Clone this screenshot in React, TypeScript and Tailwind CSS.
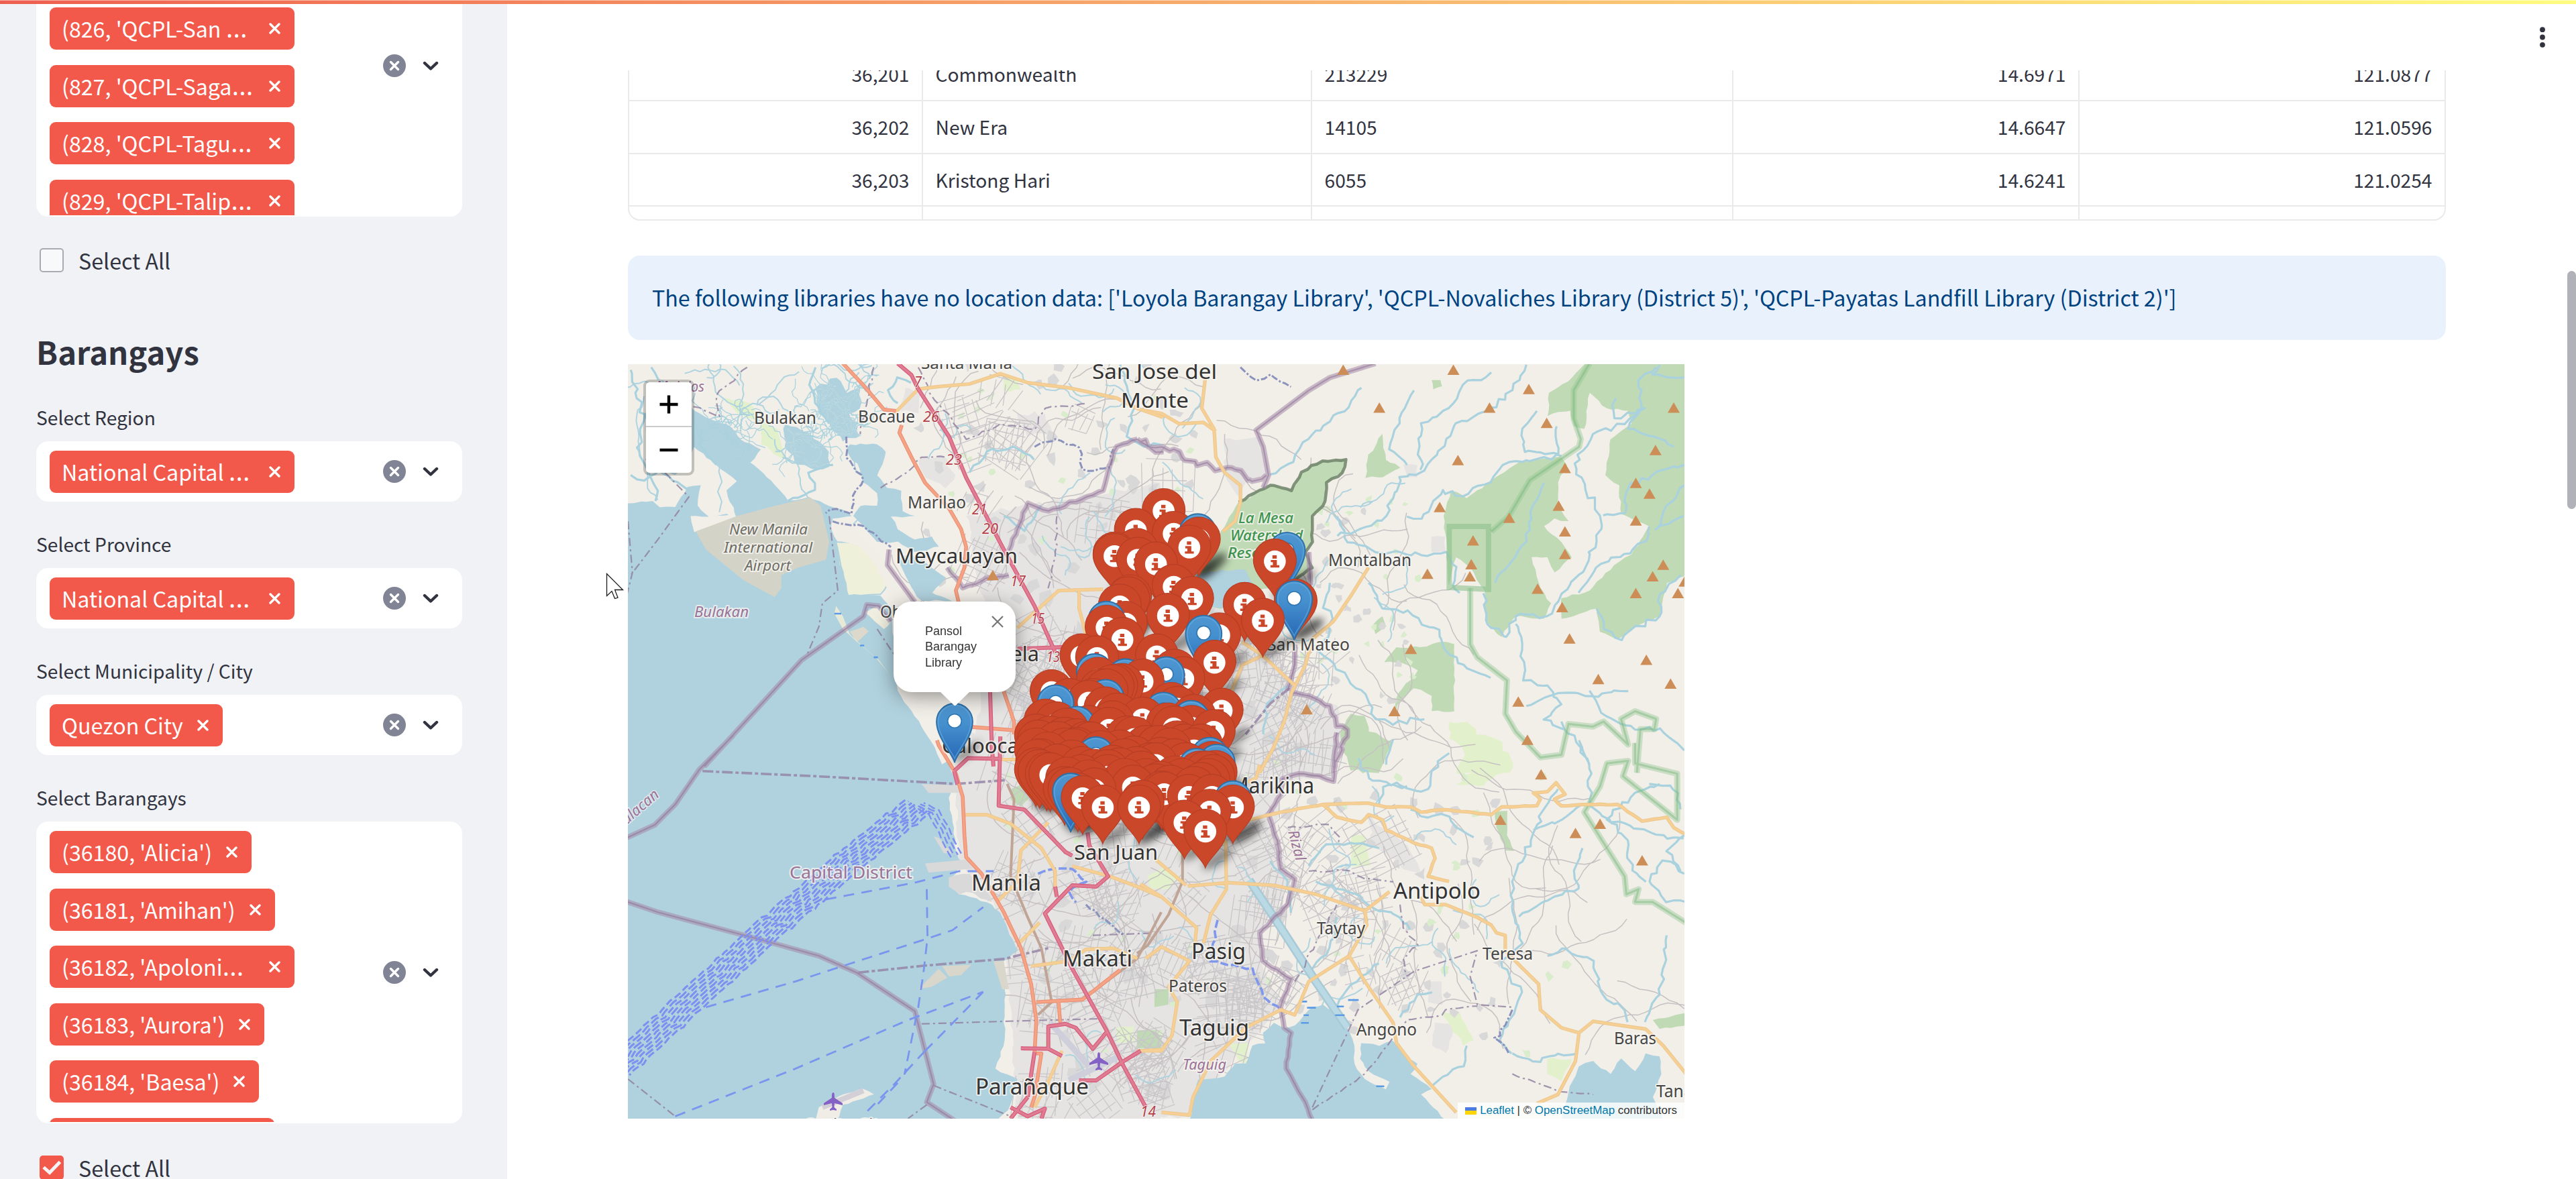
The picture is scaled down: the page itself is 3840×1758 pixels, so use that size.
import React from "react";

/* ---------- helpers for the map drawing ---------- */

type Pt = [number, number];
type Sheet = "nw" | "sw" | "ne" | "se";

// Each quarter of the map is digitised on its own sheet: [x scale, x shift, y shift]
const SHEETS: Record<Sheet, [number, number, number]> = {
  nw: [1.96, -6, -3],
  sw: [1.96, -6, 557],
  ne: [1.912, 764, -3],
  se: [1.912, 764, 557],
};

function pts(sheet: Sheet, list: string): Pt[] {
  const [sx, dx, dy] = SHEETS[sheet];
  return list.split(" ").map((p) => {
    const [x, y] = p.split(",").map(Number);
    return [x / sx + dx, y / 2.613 + dy] as Pt;
  });
}

function rng(seed: number) {
  let s = seed;
  return () => {
    s = (s * 1664525 + 1013904223) % 4294967296;
    return s / 4294967296;
  };
}

function toD(p: Pt[], close = false) {
  return "M" + p.map(([x, y]) => x.toFixed(1) + " " + y.toFixed(1)).join("L") + (close ? "Z" : "");
}

// Subdivides a line and shakes it so that it reads as a river or a coast
function wiggle(p: Pt[], amp: number, seed = 7, step = 9): Pt[] {
  const r = rng(seed);
  const out: Pt[] = [p[0]];
  for (let i = 1; i < p.length; i++) {
    const [x0, y0] = p[i - 1];
    const [x1, y1] = p[i];
    const n = Math.max(1, Math.round(Math.hypot(x1 - x0, y1 - y0) / step));
    for (let k = 1; k <= n; k++) {
      const t = k / n;
      const a = k === n ? amp * 0.3 : amp;
      out.push([x0 + (x1 - x0) * t + (r() - 0.5) * 2 * a, y0 + (y1 - y0) * t + (r() - 0.5) * 2 * a]);
    }
  }
  return out;
}

const line = (s: Sheet, l: string, amp = 0) => toD(amp ? wiggle(pts(s, l), amp, l.length * 13 + 5) : pts(s, l));
const area = (s: Sheet, l: string, amp = 0) => {
  const p = pts(s, l);
  p.push(p[0]);
  return toD(amp ? wiggle(p, amp, l.length * 7 + 3) : p, true);
};

/* ---------- map data ---------- */

const BAY = toD(
  wiggle(
    [
      ...pts("nw", "-20,552 85,540 105,565 150,565 185,485 225,480 215,560 250,605 300,590 330,610 300,500 330,465 270,400 205,330 150,440 130,430 120,380 190,180 240,215 300,240 340,300 400,340 370,390 430,460 480,540 540,525 600,560 640,575 665,600 610,610 605,650 625,700 630,790 670,830 690,905 750,910 780,960 790,1100 800,1280 850,1380 900,1480 930,1568"),
      ...pts("sw", "945,90 970,170 950,235 960,330 970,440 990,490 950,560 980,610 1060,640 1100,680 1150,830 1110,870 1115,1000 1110,1200 1085,1290 1150,1330 1130,1430 1090,1500 -20,1500"),
    ],
    1.6,
    3,
  ),
  true,
);

const WATER = [
  area("nw", "560,100 620,60 650,120 690,100 690,180 660,200 690,290 640,310 600,240 570,200", 3),
  area("nw", "470,240 540,280 600,350 600,410 560,420 500,390 470,330", 3),
  area("nw", "660,320 740,320 765,350 740,440 770,490 810,500 815,580 850,600 780,600 800,650 850,690 900,680 920,720 850,740 800,700 740,700 700,640 670,600 690,560 740,560 740,510 700,470 690,420 650,340", 2),
  area("nw", "800,760 840,750 900,800 940,840 900,900 960,930 870,930 830,850", 2),
  area("ne", "160,830 230,810 300,810 320,860 290,890 240,960 200,950", 2),
  area("se", "140,1490 165,1330 240,1320 270,1270 300,1270 320,1200 355,1190 350,1150 380,1110 410,1130 440,1120 490,1050 520,1040 560,1080 590,1130 610,1200 610,1270 640,1330 700,1370 710,1340 650,1300 625,1250 630,1190 680,1200 720,1180 760,1250 790,1270 770,1310 830,1370 800,1390 870,1490", 1.5),
  area("se", "1200,1490 1220,1380 1250,1280 1290,1260 1340,1310 1370,1250 1410,1300 1440,1230 1480,1240 1485,1310 1460,1400 1490,1490", 1.5),
];

const FOREST = [
  area("ne", "1275,0 1570,0 1570,820 1500,860 1480,990 1400,1040 1360,1080 1310,1050 1300,960 1200,1000 1200,920 1280,890 1350,790 1400,750 1450,640 1370,590 1365,480 1325,440 1340,300 1400,240 1390,190 1330,180 1280,120 1265,260 1235,250 1225,190 1175,200 1160,210 1165,120 1230,60", 1.5),
  area("ne", "885,500 930,530 1000,460 1080,390 1200,370 1215,400 1190,470 1190,560 1220,620 1180,610 1150,640 1200,700 1230,760 1180,820 1160,760 1115,760 1140,880 1170,940 1150,1000 1070,990 1030,1070 985,1010 980,890 940,800 900,760 880,870 865,600", 1.5),
  area("ne", "800,1110 860,1090 895,1100 895,1360 830,1360 830,1300 780,1270 740,1320 720,1380 735,1290 790,1200 740,1170 695,1170 730,1110", 1.5),
  area("ne", "690,280 700,380 740,410 690,450 640,450 650,360", 2),
  area("ne", "690,990 700,1030 670,1060 665,1020", 1),
  area("ne", "600,1370 640,1380 650,1440 690,1460 720,1480 680,1600 600,1590 570,1450", 3),
  area("ne", "830,70 855,70 860,95 835,105", 1),
  area("se", "1010,290 1045,285 1045,380 1065,440 1040,440 1015,350", 1),
  area("se", "1460,1100 1560,1070 1560,1120 1480,1135", 1),
  area("se", "40,980 80,980 80,1040 40,1050", 0),
  area("se", "-10,1140 60,1140 60,1210 -10,1210", 0),
  area("sw", "1130,200 1190,170 1190,230 1160,270 1130,240", 1),
];

const MEADOW = [
  area("ne", "880,1400 930,1400 960,1450 1030,1480 1030,1600 900,1600 930,1500 880,1470", 3),
  area("se", "900,20 1050,60 1060,120 960,190 900,180 960,120", 3),
  area("se", "600,380 640,380 655,500 600,500", 1),
  area("se", "20,540 70,500 110,540 80,590 30,590", 1),
  area("nw", "620,700 690,710 720,790 760,830 740,900 690,905 670,820 630,800", 1),
  area("nw", "290,140 370,160 400,230 330,200", 2),
  area("nw", "400,230 450,260 470,380 400,320", 2),
  area("nw", "1110,60 1150,60 1160,110 1110,110", 2),
  area("sw", "1440,1130 1490,1120 1490,1190 1440,1190", 2),
  area("se", "860,1070 910,1070 950,1180 920,1200", 2),
  area("se", "1160,1250 1230,1250 1200,1340 1160,1310", 2),
  area("se", "250,1190 310,1190 300,1270 280,1260", 1),
];

const URBAN = [
  area("nw", "860,380 930,360 970,440 940,490 880,450", 3),
  area("nw", "820,100 870,120 860,200 810,190", 3),
  area("nw", "1150,200 1230,200 1250,280 1180,290", 4),
  area("nw", "1000,600 1568,470 1568,1600 1000,1568 1080,1100", 4),
  area("sw", "960,-20 1570,-20 1570,1500 1150,1500 1120,880 1080,640 980,480", 2),
  area("se", "-20,-30 560,-30 550,160 400,160 380,400 430,560 340,770 350,900 400,1050 300,1200 140,1480 -20,1480", 3),
  area("ne", "-20,700 260,700 440,1280 560,1340 590,1500 540,1600 -20,1600", 3),
  area("ne", "240,300 340,290 360,440 300,470 280,530 240,440", 3),
  area("ne", "830,680 870,680 870,740 830,740", 2),
  area("ne", "750,400 790,400 790,450 760,450", 2),
  area("se", "650,300 700,360 760,420 800,540 740,500 660,410", 3),
  area("se", "820,950 860,950 860,1040 820,1030", 2),
  area("se", "840,1110 900,1110 870,1230 830,1200", 2),
];

function scatter(seed: number, n: number, x0: number, y0: number, x1: number, y1: number, size: number) {
  const r = rng(seed);
  let d = "";
  for (let i = 0; i < n; i++) {
    const cx = x0 + r() * (x1 - x0);
    const cy = y0 + r() * (y1 - y0);
    const k = 5 + Math.floor(r() * 4);
    const ring: Pt[] = [];
    for (let j = 0; j < k; j++) {
      const a = (j / k) * Math.PI * 2;
      const q = size * (0.3 + r() * 0.8);
      ring.push([cx + Math.cos(a) * q, cy + Math.sin(a) * q]);
    }
    d += toD(ring, true);
  }
  return d;
}

function streetGrids(seed: number, n: number, x0: number, y0: number, x1: number, y1: number) {
  const r = rng(seed);
  let d = "";
  for (let i = 0; i < n; i++) {
    const cx = x0 + r() * (x1 - x0);
    const cy = y0 + r() * (y1 - y0);
    const a = r() * 1.5;
    const c = Math.cos(a);
    const s = Math.sin(a);
    const h = 18 + r() * 26;
    const gap = 10 + r() * 9;
    for (let t = -h; t <= h; t += gap) {
      const e = h * (0.6 + r() * 0.5);
      const b = (r() - 0.5) * 8;
      d += toD([[cx + t * c - e * s, cy + t * s + e * c], [cx + t * c + e * s + b, cy + t * s - e * c]]);
      if (r() > 0.4) d += toD([[cx + e * c - t * s, cy + e * s + t * c], [cx - e * c - t * s, cy - e * s + t * c + b]]);
    }
  }
  return d;
}

function wander(seed: number, n: number, x0: number, y0: number, x1: number, y1: number, steps: number, len: number, turn: number) {
  const r = rng(seed);
  let d = "";
  for (let i = 0; i < n; i++) {
    let x = x0 + r() * (x1 - x0);
    let y = y0 + r() * (y1 - y0);
    let a = r() * 6.28;
    const p: Pt[] = [[x, y]];
    for (let j = 0; j < steps; j++) {
      a += (r() - 0.5) * turn;
      x += Math.cos(a) * len;
      y += Math.sin(a) * len;
      p.push([x, y]);
    }
    d += toD(p);
  }
  return d;
}

const BLOCKS = scatter(11, 70, 560, 330, 1010, 1110, 15) + scatter(12, 45, 430, 0, 880, 330, 11) + scatter(13, 55, 1000, 640, 1300, 1010, 10) + scatter(15, 22, 1010, 180, 1160, 520, 8);
const GREENS = scatter(21, 26, 1000, 150, 1180, 520, 7) + scatter(22, 30, 560, 560, 1010, 1110, 7) + scatter(24, 22, 440, 20, 860, 330, 7) + scatter(25, 20, 1020, 600, 1420, 1050, 8);
const STREETS = streetGrids(31, 115, 570, 400, 1010, 1110) + streetGrids(33, 14, 480, 40, 860, 330) + streetGrids(35, 12, 1010, 680, 1160, 960) + streetGrids(36, 8, 960, 420, 1060, 620);
const TRACKS = wander(41, 36, 430, 10, 880, 340, 12, 12, 1.1) + wander(42, 22, 980, 130, 1200, 640, 13, 12, 1.1) + wander(43, 24, 1000, 640, 1500, 1080, 16, 12, 0.9) + wander(44, 40, 560, 560, 1000, 1100, 12, 12, 0.7);
const BROOKS = wander(51, 18, 0, 0, 200, 140, 12, 8, 1.6) + wander(52, 16, 240, 0, 480, 300, 10, 8, 1.8) + wander(53, 16, 580, 0, 880, 330, 12, 7, 1.5) + wander(54, 12, 1000, 150, 1160, 640, 12, 7, 1.5) + wander(55, 14, 1000, 640, 1300, 1040, 12, 7, 1.5) + wander(56, 10, 640, 640, 990, 1090, 10, 7, 1.5);
const FISHPONDS = wander(57, 34, 270, 30, 345, 110, 9, 7, 2.4) + wander(58, 18, 230, 90, 300, 150, 8, 7, 2.4) + wander(59, 20, 110, 80, 180, 120, 8, 7, 2.4);

const RIVERS = [
  line("ne", "630,100 600,150 540,230 480,300 420,400 370,440", 4),
  line("ne", "780,110 740,220 710,340 760,400", 3),
  line("ne", "1000,40 920,90 880,180 800,240 795,330 800,420", 4),
  line("ne", "1100,10 1060,110 1000,180 900,240 870,300 830,380 800,430 740,450 700,600 660,640 560,680", 4),
  line("ne", "1130,190 1090,260 1095,350 1190,360 1185,250", 3),
  line("ne", "1200,365 1100,380 1030,400 1000,470 920,520 860,500 830,560 800,610 760,600", 4),
  line("ne", "1355,140 1350,220 1400,200 1440,180 1380,240 1290,280 1260,340 1240,420 1270,500 1310,600 1300,700 1260,820 1200,900 1160,990 1070,990 1040,1070 990,1020 975,900", 5),
  line("ne", "1300,960 1320,1040 1370,1080 1400,1040 1480,990 1480,900 1540,830", 4),
  line("ne", "1450,640 1440,700 1380,750 1300,800 1250,900", 4),
  line("ne", "1550,400 1460,440 1390,490 1380,590 1320,600", 4),
  line("ne", "1550,480 1500,560 1470,650 1550,600", 3),
  line("ne", "1470,20 1420,70 1430,180 1390,260 1480,300 1520,330", 3),
  line("ne", "1550,60 1460,50 1480,10", 2),
  line("ne", "1150,470 1120,560 1100,700 1050,790 1010,860", 3),
  line("ne", "560,600 590,700 670,740 740,740 800,750 870,740 900,800 890,870 910,900", 3),
  line("ne", "650,860 690,960 760,970 800,1020 850,1040 870,1120 920,1180 1000,1230", 4),
  line("ne", "540,860 520,960 550,1000 510,1130 560,1200 640,1290 660,1370 720,1410 810,1390", 5),
  line("ne", "1070,1020 1090,1100 1090,1240 1160,1260 1200,1330 1150,1390 1210,1430", 4),
  line("ne", "1100,1340 1180,1290 1270,1300 1390,1280", 4),
  line("ne", "1280,1280 1330,1380 1400,1420 1480,1430 1550,1510", 4),
  line("ne", "1200,1400 1240,1480 1280,1568", 4),
  line("ne", "720,1470 700,1568", 2),
  line("ne", "350,1450 360,1330 420,1260", 3),
  line("ne", "400,860 400,1000 370,1120", 3),
  line("se", "880,60 830,130 820,200 760,200 700,170 650,160 620,80", 4),
  line("se", "680,260 690,190 760,190", 3),
  line("se", "1190,200 1150,280 1120,370 1090,480 1060,560 1070,720 1090,800 1030,870 1050,930 1090,990 1050,1100 1020,1180 1060,1230", 4),
  line("se", "1120,360 1200,320 1260,260", 3),
  line("se", "1260,430 1240,500 1250,590 1150,640 1080,700", 4),
  line("se", "1250,10 1280,100 1280,260 1360,340 1390,420 1400,520 1440,560", 4),
  line("se", "1480,180 1400,230 1330,320 1470,380 1550,390", 4),
  line("se", "1450,180 1520,200 1540,280", 4),
  line("se", "1160,850 1200,820 1290,870 1320,1000 1380,1060 1390,1110", 4),
  line("se", "1500,770 1490,900 1480,1000 1440,1110", 4),
  line("se", "1550,530 1490,480 1450,560 1500,640 1551,640", 4),
  line("se", "770,280 820,310 860,300 950,390", 4),
  line("se", "480,500 520,430 600,410 680,430", 4),
  line("se", "500,560 580,590 650,650 740,700 770,750", 4),
  line("se", "370,480 420,560 430,680", 3),
  line("se", "560,700 540,820 490,900", 3),
  line("se", "680,880 600,960 560,1050", 3),
  line("se", "740,1090 790,1000 830,990", 3),
  line("se", "1060,1230 1120,1260 1180,1240 1240,1230", 3),
  line("se", "930,1200 920,1280 860,1320 830,1360", 3),
  line("se", "1550,380 1500,440 1540,520", 3),
  line("nw", "1450,10 1490,180 1470,290 1520,330 1568,320", 3),
  line("nw", "1010,430 1060,350 1140,330 1200,380", 3),
  line("nw", "800,160 770,110 800,60 840,80", 3),
  line("nw", "560,20 540,90 560,160 600,240", 3),
  line("nw", "80,20 140,120 150,180", 3),
  line("nw", "20,30 60,230 40,330 70,430 100,500 90,540", 4),
  line("nw", "20,440 60,460 100,420 190,500", 3),
  line("nw", "230,260 220,320 270,400", 2),
  line("nw", "480,540 560,500 540,430 610,400", 3),
  line("nw", "1110,600 1170,660 1200,600 1220,560", 3),
];

const NAVY_RIVERS = [
  line("nw", "1200,330 1260,300 1330,330 1340,420 1420,410 1430,340", 3),
  line("nw", "650,290 650,370 700,460 670,520 665,590 620,570 590,590", 2),
  line("nw", "610,620 700,640 780,720", 2),
  line("ne", "285,20 330,70 370,50 430,95", 3),
  line("sw", "1350,650 1460,765", 2),
  line("se", "1060,1060 1040,1120 1010,1170 1050,1230", 3),
];

const PROVINCE = [
  line("nw", "235,1575 520,1160 700,990 710,945 745,950 780,1010"),
  line("nw", "775,730 770,790 850,935"),
  line("sw", "320,-10 220,125 150,260 90,340 0,395"),
  line("sw", "0,635 100,680 380,780 570,850 680,915 850,1065 905,1350 885,1420 970,1495"),
  line("nw", "1125,735 1150,650 1180,550 1240,580 1400,500 1420,400 1440,330 1500,300", 1.5),
  line("nw", "1500,300 1540,340 1575,350", 3),
  line("ne", "670,5 540,60 480,110 330,265 350,330 365,440 350,490"),
  line("ne", "0,310 60,330 120,370 200,410 260,410 310,460 360,440", 5),
  line("ne", "480,740 485,870"),
  line("ne", "440,1100 440,1180 420,1280"),
  line("ne", "425,1290 480,1300 540,1340 560,1420 590,1430 550,1600", 3),
  line("se", "560,-20 550,170 510,150 450,140 405,160 400,220 365,300 390,400 400,510 440,550 420,650 340,760 350,870 430,940 400,1050 410,1130 430,1150 415,1290 470,1420 490,1490", 1.2),
  line("nw", "945,800 990,880 1060,840 1125,830", 2),
];

const MUNICIPAL = [
  line("nw", "12,620 25,820 10,900"),
  line("nw", "120,430 190,525 100,690 20,830"),
  line("nw", "600,600 610,720 625,890 580,940 570,1030 535,1140"),
  line("sw", "12,1330 150,1475"),
  line("sw", "905,1355 1130,1475"),
  line("sw", "885,1430 830,1484"),
  line("sw", "870,1115 1110,1105 1390,1095"),
  line("sw", "1370,770 1568,760"),
  line("nw", "360,20 270,130 280,210 190,160", 2),
  line("nw", "750,490 830,430 870,370 940,370", 2),
  line("nw", "730,20 690,280", 2),
  line("nw", "860,20 900,130 1000,300 1100,240 1200,260 1230,180 1350,160", 2),
  line("nw", "1265,600 1260,760 1240,880", 2),
  line("nw", "740,1040 790,1140"),
  line("se", "490,1440 590,1150 620,1060 780,910 960,830 940,930 960,1040 1060,1050"),
  line("se", "490,1450 640,1310 760,1100 860,1080 870,1060 960,1045", 1),
  line("se", "480,520 600,520 640,550 720,560", 2),
  line("se", "420,350 540,340 570,390 560,420", 2),
  line("se", "740,650 750,740 790,810 750,860 760,930", 2),
  line("se", "1060,1310 1200,1380 1290,1390", 1),
  line("se", "440,950 500,800 560,650", 2),
];

const MUNICIPAL_BOLD = [line("sw", "230,130 560,150 970,180 1120,165"), line("sw", "685,915 880,888 1110,862 1240,820"), line("ne", "425,1270 370,1330 300,1450")];

const PRIMARY = [
  line("nw", "790,200 860,105 920,95 1010,85 1100,45 1180,80 1300,100 1440,140 1500,180 1575,215"),
  line("nw", "1150,1035 1270,890 1400,885"),
  line("nw", "1330,890 1330,960 1350,1060"),
  line("ne", "185,60 175,180 210,260 215,370 240,430 285,480 285,545 270,620 235,660"),
  line("ne", "0,185 60,200 110,240 180,235 215,270"),
  line("ne", "650,800 600,910 550,1010 490,1080 470,1180 430,1290 410,1400 380,1500 340,1600"),
  line("ne", "290,1090 350,1145 440,1260"),
  line("ne", "345,1145 290,1180 260,1280"),
  line("se", "310,320 400,290 520,260 650,255 700,270 770,270 800,290 860,280 1000,300 1030,270 1130,265 1140,240 1120,215 1160,210 1185,175 1210,220 1180,240 1200,265 1260,260 1360,260 1430,325 1500,310 1520,350 1551,375", 0.6),
  line("se", "520,260 560,310 630,330 650,300 690,320 700,360 780,410 830,430 840,470 820,540 880,560", 0.6),
  line("se", "135,578 250,565 380,575 500,610 640,675 710,600"),
  line("se", "640,675 645,730 595,850 640,950 720,1110 730,1190 780,1280 900,1460"),
  line("se", "595,850 480,950 440,1080 400,1060 300,1130 200,1260 150,1400 140,1470 60,1460"),
  line("se", "800,620 810,650 870,650 960,700 1000,730 1015,760 1040,770 1040,830 1090,900 1135,960 1140,1060 1200,1130 1250,1150 1290,1105 1440,1135 1490,1200 1555,1310"),
  line("se", "1250,1150 1240,1260 1190,1390 1130,1425"),
  line("se", "243,400 245,590 200,690 180,800"),
  line("se", "0,570 60,620 160,740 155,800"),
  line("se", "40,470 130,575"),
  line("se", "15,860 60,815 140,870 80,970 105,1030 90,1160 60,1220 -10,1220"),
  line("ne", "340,1568 330,1620 300,1640"),
  line("sw", "1100,85 1150,85"),
  line("sw", "995,300 1060,300 1130,335 1220,430 1260,520 1260,600"),
  line("sw", "1240,330 1160,440 1150,560 1090,640"),
  line("sw", "1190,890 1300,870 1350,825 1430,820 1500,860"),
  line("sw", "1310,500 1420,540 1500,580 1570,620"),
  line("sw", "1215,720 1155,800"),
  line("sw", "1280,1220 1240,1340 1200,1440"),
  line("sw", "1510,1220 1570,1215"),
];

const TRUNK = [
  line("nw", "640,5 700,90 760,185 795,190"),
  line("nw", "812,245 805,275 840,370 880,470 950,570 985,650 1000,720 995,800 970,890 978,935"),
  line("nw", "1110,1283 1140,1400 1140,1450"),
  line("nw", "1000,1420 1150,1435"),
  line("sw", "915,10 920,30 970,140 990,230 995,380 1000,465 1045,530 1110,680 1160,820 1190,960 1205,1100 1200,1230 1220,1230 1200,1400 1190,1440"),
  line("sw", "1205,1030 1340,1020 1450,905"),
  line("sw", "1270,1030 1275,1110"),
];

const BROWN_ROADS = [
  line("sw", "1120,180 1140,240 1130,540 1180,700 1220,820 1250,1030 1210,1080"),
  line("se", "120,440 120,560 80,690 20,810 -10,840"),
  line("sw", "1340,1020 1500,860 1570,680"),
];

const MOTORWAY = [
  line("nw", "800,5 840,50 860,105 950,290 1000,450 1110,730 1200,950 1260,1130"),
  line("nw", "1150,1117 1290,1110"),
  line("nw", "1070,1283 1075,1500 1080,1575"),
  line("sw", "965,130 1005,80 1100,82"),
  line("sw", "965,130 975,180"),
  line("sw", "1100,-5 1095,265 1170,280 1290,445 1310,460"),
  line("sw", "1355,370 1360,420 1415,540 1380,580 1310,575 1230,685 1310,900 1410,1140 1460,1280 1525,1440"),
  line("sw", "1260,580 1265,620"),
  line("sw", "1160,1210 1240,1212 1240,1125 1290,1115 1320,1130 1370,1212 1412,1145"),
  line("sw", "1240,1212 1280,1240"),
  line("sw", "1330,1335 1380,1335 1460,1260 1510,1220"),
  line("sw", "1180,1400 1130,1484"),
  line("sw", "1130,1440 1180,1475 1230,1445 1220,1484"),
  line("sw", "1200,1225 1180,1400"),
];

const PARK_LINES = [
  line("ne", "1280,5 1235,110 1235,220 1255,300 1250,330 1110,460 1050,600 1000,660"),
  line("ne", "940,880 940,1100 960,1150 1045,1240 1040,1370 1070,1440 1140,1540 1200,1530 1220,1410 1290,1420 1320,1400 1390,1490 1370,1390 1410,1360 1470,1390 1465,1430 1425,1430 1415,1600"),
  line("se", "1410,20 1410,100 1530,140 1530,320 1375,150 1390,90 1330,100 1310,190 1265,290 1380,540 1385,610 1420,590 1410,640 1460,640 1560,725"),
];

const FERRIES = [
  line("sw", "240,1050 500,950 870,790 960,750 1050,660"),
  line("sw", "590,630 850,565 980,520 1080,520"),
  line("sw", "885,590 887,780 875,920 860,1050 840,1180 820,1310 835,1280"),
  line("sw", "150,1475 500,1290 830,1100 1050,990"),
  line("sw", "1050,990 940,1140 880,1220"),
  line("sw", "880,1220 790,1350 700,1470"),
  line("sw", "800,1345 740,1430"),
];

const PEAKS: Pt[] = [
  ...pts("ne", "578,30 892,30 1107,105 681,178 995,178 1158,237 1520,178 1468,343 905,382 1210,413 1412,471 1451,513 853,565 1192,560 1051,607 1412,617 1210,660 948,695 1210,748 943,788 939,835 818,825 1490,790 1460,835 1132,883 1412,900 1532,900 1202,955 771,1118 1223,1077 1442,1160 1305,1235 1511,1253 1077,1323 724,1360 474,1353 1103,1472 1551,855"),
  ...pts("se", "1142,143 1026,320 1310,336 1240,372 1430,478"),
  ...pts("nw", "1078,830"),
];

type Kind = "city" | "town" | "admin" | "exit" | "park" | "field";
// [text, left, right, baseline, size, kind]
const LABELS: [string, number, number, number, number, Kind][] = [
  ["Santa Maria", 437, 573, 7, 24, "town"],
  ["San Jose del", 692, 878, 22, 31, "city"],
  ["Monte", 735, 836, 65, 31, "city"],
  ["Malolos", 42, 114, 41, 21, "admin"],
  ["Bulakan", 188, 281, 89, 25, "town"],
  ["Bocaue", 343, 428, 87, 25, "town"],
  ["7", 427, 438, 34, 21, "exit"],
  ["26", 440, 464, 86, 21, "exit"],
  ["23", 474, 498, 150, 21, "exit"],
  ["21", 513, 535, 224, 21, "exit"],
  ["20", 528, 552, 253, 21, "exit"],
  ["17", 570, 593, 331, 21, "exit"],
  ["15", 601, 621, 387, 21, "exit"],
  ["13", 624, 644, 444, 21, "exit"],
  ["14", 764, 787, 1122, 21, "exit"],
  ["Marilao", 417, 504, 215, 25, "town"],
  ["New Manila", 151, 268, 254, 21, "field"],
  ["International", 143, 275, 281, 21, "field"],
  ["Airport", 174, 243, 308, 21, "field"],
  ["Bulakan", 99, 180, 377, 22, "admin"],
  ["Meycauayan", 399, 581, 297, 31, "city"],
  ["Obando", 376, 462, 378, 25, "town"],
  ["Valenzuela", 458, 613, 443, 31, "city"],
  ["Caloocan", 468, 602, 580, 31, "city"],
  ["Capital District", 241, 424, 767, 25, "admin"],
  ["Manila", 512, 616, 785, 32, "city"],
  ["San Juan", 665, 790, 739, 31, "city"],
  ["Makati", 648, 752, 898, 32, "city"],
  ["Parañaque", 518, 687, 1089, 32, "city"],
  ["Cavite City", 262, 388, 1143, 25, "town"],
  ["La Mesa", 910, 992, 237, 22, "park"],
  ["Watershed", 898, 1006, 263, 22, "park"],
  ["Reserve", 894, 974, 289, 22, "park"],
  ["Montalban", 1044, 1168, 301, 25, "town"],
  ["San Mateo", 953, 1076, 427, 25, "town"],
  ["Marikina", 898, 1023, 640, 32, "city"],
  ["Antipolo", 1141, 1271, 797, 32, "city"],
  ["Taytay", 1027, 1099, 850, 25, "town"],
  ["Teresa", 1274, 1349, 888, 25, "town"],
  ["Pasig", 840, 921, 887, 32, "city"],
  ["Pateros", 806, 893, 936, 25, "town"],
  ["Taguig", 822, 926, 1001, 32, "city"],
  ["Taguig", 827, 892, 1052, 22, "admin"],
  ["Angono", 1086, 1176, 1001, 25, "town"],
  ["Baras", 1470, 1533, 1014, 25, "town"],
  ["Tanay", 1533, 1600, 1093, 25, "town"],
];

const INK: Record<Kind, string> = { city: "#333333", town: "#454545", admin: "#9a7398", exit: "#b3404a", park: "#3d9450", field: "#6e6e66" };

/* ---------- markers: [x, y of the head's top, blue?] on the marker sheet ---------- */

const RAW_PINS: [number, number, number?][] = [
  [713, 72], [597, 147], [755, 158], [855, 165, 1], [860, 180], [600, 222], [605, 256], [508, 236], [508, 242], [820, 210], [681, 273], [755, 358],
  [573, 397], [565, 405], [832, 404], [530, 432], [475, 495, 1], [555, 497], [475, 512], [731, 467], [1051, 426], [1228, 235, 1], [1177, 262], [1264, 414],
  [1258, 418, 1], [1127, 486], [945, 541], [880, 548, 1], [541, 558], [370, 620], [435, 627], [685, 620], [925, 644], [425, 693, 1], [553, 712, 1],
  [760, 678], [795, 706], [724, 704, 1], [625, 715], [440, 708], [245, 755], [450, 752], [500, 736], [540, 732], [515, 734], [475, 752], [471, 790, 1],
  [262, 810, 1], [320, 788], [400, 795], [420, 788], [745, 803], [770, 818], [955, 825], [712, 838, 1], [828, 869, 1], [625, 858], [470, 820], [520, 843],
  [755, 892], [840, 848], [730, 880], [220, 866], [265, 876], [350, 891, 1], [310, 900], [400, 890], [500, 872], [485, 897], [590, 932], [922, 905],
  [830, 890], [180, 922], [190, 945], [240, 930], [270, 950], [300, 934], [350, 940], [390, 950], [560, 930], [640, 965], [690, 965], [770, 948],
  [800, 960], [840, 975], [740, 975], [870, 960], [180, 975], [200, 1015], [185, 1018], [230, 990], [350, 972], [340, 978], [300, 975], [410, 952], [450, 985], [530, 982],
  [590, 1005], [430, 1006, 1], [905, 1008, 1], [935, 1034, 1], [915, 1026], [850, 1050, 1], [865, 1062], [805, 1030], [760, 1015], [700, 1010], [660, 1030], [600, 1045],
  [550, 1015], [500, 1040], [180, 1050], [195, 1056], [225, 1066], [240, 1068], [270, 1035], [330, 1020], [370, 1045], [420, 1055], [480, 1056], [530, 1050],
  [620, 1062], [680, 1030], [640, 1090], [700, 1100], [890, 1062], [920, 1075], [930, 1060], [870, 1105], [900, 1090], [840, 1120], [790, 1090], [760, 1080], [310, 1085],
  [370, 1075], [400, 1095], [425, 1125], [300, 1120], [320, 1124], [325, 1143, 1], [355, 1145], [375, 1155], [459, 1190], [585, 1115], [625, 1172], [610, 1190], [715, 1140], [680, 1110],
  [740, 1115], [818, 1150], [915, 1150], [1002, 1172, 1], [1002, 1190], [905, 1206], [800, 1247], [887, 1281], [550, 1090], [480, 1075], [705, 1137],
];

const PINS = RAW_PINS.map(([x, y, b]) => ({ x: x / 2.8 + 544, y: y / 2.529 + 157, blue: !!b })).sort((a, b) => a.y + (a.blue ? 1 : 0) - b.y - (b.blue ? 1 : 0));

function RedPin({ x, y }: { x: number; y: number }) {
  return (
    <g transform={`translate(${x.toFixed(1)} ${y.toFixed(1)})`}>
      <path d="M0 87.5C-4 74-32 55-32 32A32 32 0 1 1 32 32C32 55 4 74 0 87.5Z" fill="#cb4729" stroke="#b63e25" strokeWidth="1.2" />
      <circle cy="33.5" r="16.3" fill="#fff" />
      <path d="M-3.6 24.3h6.4v5h-6.4zM-6 31.3H3V39.2H6.7V42.6H-6.6V39.2H-3V34.7H-6z" fill="#cb4729" />
    </g>
  );
}

function BluePin({ x, y }: { x: number; y: number }) {
  return (
    <g transform={`translate(${x.toFixed(1)} ${y.toFixed(1)})`}>
      <path d="M0 89C-2 78-27 52-27 28A27 27 0 1 1 27 28C27 52 2 78 0 89Z" fill="url(#pin)" stroke="#2e6fa6" strokeWidth="1.8" />
      <path d="M0 83C-3 74-24.5 50-24.5 28A24.5 24.5 0 1 1 24.5 28C24.5 50 3 74 0 83Z" fill="none" stroke="#6fb0e0" strokeOpacity=".55" strokeWidth="1.6" />
      <circle cy="27" r="10.3" fill="#fff" stroke="#2f78b4" strokeWidth="1.6" />
    </g>
  );
}

function Strokes({ list, color, width, dash, opacity = 1 }: { list: string[]; color: string; width: number; dash?: string; opacity?: number }) {
  return <path d={list.join("")} fill="none" stroke={color} strokeWidth={width} strokeDasharray={dash} strokeOpacity={opacity} strokeLinejoin="round" />;
}

function Plane({ x, y }: { x: number; y: number }) {
  return <path transform={`translate(${x} ${y})`} d="M0-13c2 0 2 4 2 8L14 3v3L2 3 1.500 9 5 12v2L0 13-5 14v-2l3.500-3L-2 3-14 6V3L-2-5c0-4 0-8 2-8z" fill="#8461c4" />;
}

function MapCanvas() {
  return (
    <svg className="absolute inset-0" width="1575" height="1125" viewBox="0 0 1575 1125" fontFamily="'Noto Sans', sans-serif">
      <defs>
        <linearGradient id="pin" x1="0" y1="0" x2="0" y2="1">
          <stop offset="0" stopColor="#4f97d1" />
          <stop offset=".35" stopColor="#458fce" />
          <stop offset="1" stopColor="#2467b4" />
        </linearGradient>
        <filter id="soft" x="-10%" y="-10%" width="120%" height="120%">
          <feGaussianBlur stdDeviation="6" />
        </filter>
        <clipPath id="lagoons">
          <path d={WATER[0] + WATER[1]} />
        </clipPath>
      </defs>

      <rect width="1575" height="1125" fill="#f2efe9" />
      <path d={URBAN.join("")} fill="#e6e4e2" />
      <path d={MEADOW.join("")} fill="#e2f1cb" />
      <path d={FOREST.join("")} fill="#c0dab5" />
      <path d={BLOCKS} fill="#d9d8d8" />
      <path d={GREENS} fill="#d9eccb" />
      <path d={STREETS} fill="none" stroke="#c9c6c9" strokeWidth="1.3" />
      <path d={TRACKS} fill="none" stroke="#c5c1c2" strokeWidth="1.5" strokeLinejoin="round" />
      <path d={BROOKS} fill="none" stroke="#afd4df" strokeWidth="2" strokeLinejoin="round" />

      <path d={area("ne", "280,545 370,480 430,500 460,430 520,385 585,380 575,430 530,470 520,560 490,600 490,700 470,740 490,800 440,850 380,880 300,900 230,960 200,950 160,830 230,660", 2)} fill="#c0dab5" />
      <Strokes list={[line("ne", "280,545 370,480 430,500 460,430 520,385 585,380 575,430 530,470 520,560 490,600 490,700 470,740 490,800 440,850", 2)]} color="#6f8369" width={4.5} opacity={0.85} />

      <path d={BAY + WATER.join("")} fill="#b0d2de" />
      <path clipPath="url(#lagoons)" d={FISHPONDS} fill="none" stroke="#e4ebe8" strokeWidth="1.4" />
      <path d={FISHPONDS} fill="none" stroke="#a9d1dd" strokeWidth="1.2" />

      <path d={area("nw", "195,600 260,600 310,595 325,612 205,662", 1)} fill="#f2efe9" />
      <path d={area("nw", "640,820 655,910 750,905 780,850 740,790 700,720 650,700 620,700", 1)} fill="#eff0da" stroke="#b0d2de" strokeWidth="2" />
      <path d={area("nw", "610,610 665,620 680,660 750,760 850,930 790,940 740,800 690,720 625,690", 1)} fill="#f0eee6" />
      <path d={area("nw", "705,975 740,950 780,1010 760,1040", 1)} fill="#f0eee0" />
      <path d={area("nw", "660,1050 700,1030 715,1050 680,1090", 1)} fill="#dcd8cb" />
      <path d={area("nw", "620,950 640,990 660,1060 700,1110 745,1160 775,1215 735,1150 690,1100 640,1040 615,980")} fill="#e8ead8" />
      <path d={area("nw", "210,660 330,600 440,560 545,528 575,560 600,700 590,770 510,800 460,830 460,880 440,915 350,850 240,730")} fill="#d4d3c7" />
      <path d={area("sw", "870,180 970,185 990,215 890,215") + area("sw", "880,490 1000,475 1020,510 890,525") + area("sw", "905,385 920,390 960,450 935,450") + area("sw", "950,545 1010,530 1060,600 1075,640 1000,600 980,610 950,580", 2)} fill="#dad9d9" />
      <path d={area("sw", "860,980 920,900 945,935 900,970") + area("sw", "930,890 1015,885 985,925 950,930") + area("sw", "1080,870 1110,870 1125,980 1105,980")} fill="#d9d6cb" />
      <path d={area("sw", "560,1490 570,1440 640,1390 700,1368 730,1390 700,1405 640,1430 625,1490", 1)} fill="#efede6" />
      <path d={line("sw", "580,1440 700,1375")} stroke="#d2d0d6" strokeWidth="8" fill="none" />
      <path d={line("sw", "1245,1110 1360,1280") + line("sw", "1300,1335 1450,1240")} stroke="#cfcedb" strokeWidth="9" fill="none" />

      <Strokes list={RIVERS} color="#a9d2de" width={3.2} />
      <Strokes list={[line("se", "310,555 400,740 500,950 590,1130")]} color="#a9c9d6" width={13} />
      <Strokes list={[line("se", "310,555 400,740 500,950 590,1130")]} color="#b9dae4" width={8} />
      <Strokes list={NAVY_RIVERS} color="#8b93bd" width={3} dash="10 3 3 3" />
      <Strokes list={[line("se", "220,710 200,870 320,900 350,1010 400,1060", 2), line("sw", "1210,530 1260,510 1310,510 1350,560 1300,600 1320,640", 2)]} color="#7f98ee" width={3.6} dash="12 4" />
      <Strokes list={[line("se", "455,1028 475,1028"), line("se", "475,1052 500,1052"), line("se", "560,1047 580,1047"), line("se", "592,1022 622,1022"), line("se", "458,1111 480,1111"), line("se", "465,1081 480,1081"), line("se", "555,1081 582,1081"), line("se", "672,1358 695,1358"), line("nw", "615,980 635,980"), line("nw", "690,1104 702,1104"), line("nw", "730,1150 742,1150")]} color="#5b9be6" width={2.6} />

      <Strokes list={PARK_LINES} color="#8fc58f" width={9} opacity={0.4} />
      <Strokes list={PARK_LINES} color="#79b67c" width={3} opacity={0.45} />
      <path d={area("ne", "880,640 992,640 992,885 880,878")} fill="none" stroke="#86bf87" strokeOpacity=".55" strokeWidth="8" />

      <Strokes list={MUNICIPAL} color="#8f7d9f" width={2.2} dash="12 5 3 5" opacity={0.8} />
      <Strokes list={MUNICIPAL_BOLD} color="#9586a8" width={3.6} dash="16 4 5 4" opacity={0.85} />
      <Strokes list={PROVINCE} color="#a58aaa" width={8} opacity={0.55} />
      <Strokes list={PROVINCE} color="#8a6b93" width={2.2} opacity={0.5} />

      {Array.from({ length: 9 }, (_, i) => (
        <path
          key={i}
          transform={`translate(${(i - 4) * 4.6} ${(i - 4) * 2.4})`}
          d={line("sw", "-20,1290 200,1020 400,775 640,500 860,265", 1.8)}
          fill="none"
          stroke="#7d90ef"
          strokeWidth="3"
          strokeDasharray={i % 2 ? "14 5" : "11 5"}
          strokeDashoffset={i * 5}
        />
      ))}
      {[-7, -2, 3, 8].map((o) => (
        <path key={o} transform={`translate(${o} ${-o * 0.4})`} d={line("sw", "860,262 905,290 940,380 970,460", 1)} fill="none" stroke="#7d90ef" strokeWidth="2.4" strokeDasharray="11 5" strokeDashoffset={o} />
      ))}
      <Strokes list={FERRIES} color="#7a95ee" width={2.8} dash="16 11" />

      <Strokes list={BROWN_ROADS} color="#c0a596" width={4} />
      <Strokes list={PRIMARY} color="#ecc68a" width={5.2} />
      <Strokes list={PRIMARY} color="#f6cf95" width={3.4} />
      <Strokes list={TRUNK} color="#ea8e70" width={5.6} />
      <Strokes list={TRUNK} color="#f5a285" width={3.6} />
      <Strokes list={MOTORWAY} color="#d65d7c" width={6} />
      <Strokes list={MOTORWAY} color="#e07d93" width={3.4} />

      {PEAKS.map(([x, y], i) => (
        <path key={i} d={`M${x} ${y - 8}L${x + 9} ${y + 7.500}H${x - 9}Z`} fill="#cd8d57" />
      ))}
      <Plane x={702} y={1039} />
      <Plane x={306} y={1099} />

      {LABELS.map(([t, l, r, base, size, kind], i) => (
        <text
          key={i}
          x={l}
          y={base}
          fontSize={size}
          textLength={r - l}
          lengthAdjust="spacingAndGlyphs"
          fill={INK[kind]}
          fontStyle={kind === "city" || kind === "town" || (kind === "admin" && size === 25) ? "normal" : "italic"}
          fontWeight={kind === "park" ? 500 : 400}
          stroke="#f8f6f2"
          strokeOpacity=".75"
          strokeWidth={kind === "exit" ? 2 : 4}
          strokeLinejoin="round"
          paintOrder="stroke"
        >
          {t}
        </text>
      ))}
      <text transform="translate(-12 696) rotate(-41)" fontSize="22" fill={INK.admin} fontStyle="italic" stroke="#dfe8ec" strokeWidth="3" paintOrder="stroke">
        Bulacan
      </text>
      <text transform="translate(984 697) rotate(75)" fontSize="22" fill={INK.admin} fontStyle="italic" stroke="#f2efe9" strokeWidth="3" paintOrder="stroke">
        Rizal
      </text>

      <g filter="url(#soft)" fill="#000">
        {PINS.map((p, i) => (
          <ellipse key={i} transform={`translate(${(p.x + 19).toFixed(1)} ${(p.y + 74).toFixed(1)}) rotate(-32)`} rx="27" ry="9" fillOpacity=".4" />
        ))}
        <ellipse transform="translate(506 578) rotate(-36)" rx="24" ry="7" fillOpacity=".4" />
      </g>
      {PINS.map((p, i) => (p.blue ? <BluePin key={i} x={p.x} y={p.y} /> : <RedPin key={i} x={p.x} y={p.y} />))}
      <BluePin x={487} y={505} />
    </svg>
  );
}

function LibraryMap() {
  return (
    <div className="relative mt-[36px] h-[1125px] w-[1575px] overflow-hidden font-['Liberation_Sans',sans-serif]">
      <MapCanvas />

      <div className="absolute left-[23px] top-[23px] w-[76px] rounded-[9px] border-[4.5px] border-black/20 bg-white bg-clip-padding">
        <div className="flex h-[67px] items-center justify-center border-b-2 border-[#ccc]">
          <svg width="28" height="28" viewBox="0 0 28 28" stroke="#000" strokeWidth="4.4">
            <path d="M14 0.500V27.500M0.500 14H27.500" />
          </svg>
        </div>
        <div className="flex h-[68px] items-center justify-center">
          <svg width="28" height="28" viewBox="0 0 28 28" stroke="#000" strokeWidth="4.400">
            <path d="M0.500 14H27.500" />
          </svg>
        </div>
      </div>

      <div className="absolute left-[396px] top-[354px] h-[135px] w-[182px] rounded-[27px] bg-white pl-[47px] pt-[33px] text-[18px] leading-[23.4px] text-[#333] shadow-[0_7px_31px_rgba(0,0,0,0.4)]">
        <p className="w-[90px]">Pansol Barangay Library</p>
        <svg className="absolute right-[18px] top-[21px]" width="18" height="18" viewBox="0 0 18 18" stroke="#757575" strokeWidth="2.200">
          <path d="M1 1L17 17M17 1L1 17" />
        </svg>
        <svg className="absolute left-[69px] top-[134px]" width="45" height="22" viewBox="0 0 45 22" fill="#fff">
          <path d="M0 0H45L24 20.500Q22.500 22 21 20.500Z" />
        </svg>
      </div>

      <div className="absolute bottom-0 right-0 flex h-[24px] items-center gap-[5px] bg-white/80 px-[11px] text-[16.900px] text-[#333]">
        <span className="flex h-[11px] w-[17px] flex-col">
          <span className="h-1/2 bg-[#4c7be1]" />
          <span className="h-1/2 bg-[#ffd500]" />
        </span>
        <span className="whitespace-nowrap">
          <span className="text-[#0078a8]">Leaflet</span> | © <span className="text-[#0078a8]">OpenStreetMap</span> contributors
        </span>
      </div>
    </div>
  );
}

/* ---------- sidebar ---------- */

type Choice = { text: string; cut?: boolean };

function Chip({ text, cut }: Choice) {
  return (
    <div className={"flex h-[63px] shrink-0 items-center gap-[21px] rounded-[9px] bg-[#f3594b] pl-[18px] pr-[21px] text-[32.2px] leading-[63px] text-white " + (cut ? "w-[365px] justify-between" : "")}>
      <span className="whitespace-pre">
        {text}
        {cut && <span className="font-['Open_Sans'] text-[41px] leading-[0]">…</span>}
      </span>
      <svg className="shrink-0" width="17" height="17" viewBox="0 0 17 17" stroke="#fff" strokeWidth="3.400" strokeLinecap="round">
        <path d="M2 2L15 15M15 2L2 15" />
      </svg>
    </div>
  );
}

function MultiSelect({ chips, size, inset = "pt-[12px]" }: { chips: Choice[]; size: string; inset?: string }) {
  return (
    <div className={"flex shrink-0 justify-between overflow-hidden rounded-[18px] border-[2px] border-white bg-white " + size}>
      <div className={"flex flex-col items-start gap-[22.5px] overflow-hidden pl-[18px] " + inset}>
        {chips.map((c) => (
          <Chip key={c.text} {...c} />
        ))}
      </div>
      <div className="flex items-center gap-[25px] self-stretch pr-[33px]">
        <svg width="34" height="34" viewBox="0 0 34 34">
          <circle cx="17" cy="17" r="17" fill="#808495" />
          <path d="M11.500 11.500L22.500 22.500M22.500 11.500L11.500 22.500" stroke="#fff" strokeWidth="3.400" strokeLinecap="round" />
        </svg>
        <svg width="24" height="14" viewBox="0 0 24 14" fill="none" stroke="#31333f" strokeWidth="4.400" strokeLinecap="round" strokeLinejoin="round">
          <path d="M3 3L12 11.500L21 3" />
        </svg>
      </div>
    </div>
  );
}

function Field({ label, chips, size = "h-[90px]" }: { label: string; chips: Choice[]; size?: string }) {
  return (
    <div className="flex shrink-0 flex-col gap-[18px]">
      <label className="h-[36px] text-[28.2px] leading-[36px]">{label}</label>
      <MultiSelect chips={chips} size={size} />
    </div>
  );
}

function SelectAll({ checked }: { checked?: boolean }) {
  return (
    <div className="flex h-[36px] shrink-0 items-center gap-[22px] pl-[5px]">
      {checked ? (
        <span className="flex size-[36px] items-center justify-center rounded-[5px] bg-[#f3594b]">
          <svg width="28" height="22" viewBox="0 0 28 22" fill="none" stroke="#f4f4f6" strokeWidth="5">
            <path d="M2 10.500L11 18.500L26.500 2.500" />
          </svg>
        </span>
      ) : (
        <span className="size-[36px] rounded-[5px] border-[2.25px] border-[#a9abb3] bg-[#f8f9fb]" />
      )}
      <span className="text-[32.2px] leading-[36px]">Select All</span>
    </div>
  );
}

function Sidebar() {
  return (
    <aside className="flex h-[1758px] w-[756px] shrink-0 flex-col overflow-hidden bg-[#f0f2f6] pl-[54px] pr-[67px]">
      <div className="-mt-[127px] flex shrink-0 flex-col">
        <MultiSelect
          size="h-[450px]"
          inset="pt-[136px]"
          chips={[
            { text: "(826, 'QCPL-San ", cut: true },
            { text: "(827, 'QCPL-Saga", cut: true },
            { text: "(828, 'QCPL-Tagu", cut: true },
            { text: "(829, 'QCPL-Talip", cut: true },
          ]}
        />
      </div>
      <div className="mt-[47px]">
        <SelectAll />
      </div>
      <h2 className="mb-[47px] mt-[85px] h-[66px] shrink-0 text-[47.200px] font-bold leading-[66px]">Barangays</h2>
      <div className="flex flex-col gap-[45px]">
        <Field label="Select Region" chips={[{ text: "National Capital ", cut: true }]} />
        <Field label="Select Province" chips={[{ text: "National Capital ", cut: true }]} />
        <Field label="Select Municipality / City" chips={[{ text: "Quezon City" }]} />
        <Field
          label="Select Barangays"
          size="h-[450px]"
          chips={[{ text: "(36180, 'Alicia')" }, { text: "(36181, 'Amihan')" }, { text: "(36182, 'Apoloni", cut: true }, { text: "(36183, 'Aurora')" }, { text: "(36184, 'Baesa')" }, { text: "(36185, 'Bagbag')" }]}
        />
      </div>
      <div className="mt-[48px]">
        <SelectAll checked />
      </div>
    </aside>
  );
}

/* ---------- main column ---------- */

const ROWS = [
  ["36,201", "Commonwealth", "213229", "14.6971", "121.0877"],
  ["36,202", "New Era", "14105", "14.6647", "121.0596"],
  ["36,203", "Kristong Hari", "6055", "14.6241", "121.0254"],
  ["", "", "", "", ""],
];

function DataTable() {
  return (
    <div className="h-[224px] overflow-hidden">
      <div className="-mt-[33px] flex h-[257px] flex-col overflow-hidden rounded-b-[18px] border-[2px] border-t-0 border-[#e9eaeb] text-[28.2px]">
        {ROWS.map((r, i) => (
          <div key={i} className="grid h-[78.75px] shrink-0 grid-cols-[438px_580px_628px_516px_1fr] border-b-[2px] border-[#e9eaeb] leading-[76px]">
            {r.map((c, j) => (
              <div key={j} className={"px-[18.5px] " + (j < 4 ? "border-r-[2px] border-[#e9eaeb] " : "") + (j === 1 || j === 2 ? "text-left" : "text-right")}>
                {c}
              </div>
            ))}
          </div>
        ))}
      </div>
    </div>
  );
}

export default function App() {
  return (
    <div className="relative flex h-[1758px] w-[3840px] overflow-hidden bg-white font-['Noto_Sans_CJK_JP','Open_Sans',sans-serif] text-[#31333f]">
      <Sidebar />
      <main className="w-[2890px] pl-[180px] pt-[105px]">
        <DataTable />
        <div className="mt-[52px] h-[126px] rounded-[18px] bg-[#e9f2fc] pl-[36px] text-[32.230px] leading-[125px] text-[#004280]">
          The following libraries have no location data: ['Loyola Barangay Library', 'QCPL-Novaliches Library (District 5)', 'QCPL-Payatas Landfill Library (District 2)']
        </div>
        <LibraryMap />
      </main>

      <div className="absolute inset-x-0 top-0 h-[6px] border-t border-white/50 bg-linear-to-r from-[#ee5f50] via-[#f7b06c] to-[#fffc80]" />
      <svg className="absolute left-[3785px] top-[38px]" width="10" height="36" viewBox="0 0 10 36" fill="#31333f">
        <circle cx="5" cy="6.200" r="3.900" />
        <circle cx="5" cy="17.500" r="3.900" />
        <circle cx="5" cy="28.800" r="3.900" />
      </svg>
      <div className="absolute right-0 top-[404px] h-[355px] w-[13px] rounded-[7px] bg-[#b0b1b9]" />
      <svg className="absolute left-[903px] top-[854px]" width="28" height="42" viewBox="0 0 28 42" fill="#fff" stroke="#1c1c1c" strokeWidth="1.300">
        <path d="M1.500 1.500V34.500L9 27.500L13.500 38.500L18 37L13.500 25.500H25.500Z" />
      </svg>
    </div>
  );
}
